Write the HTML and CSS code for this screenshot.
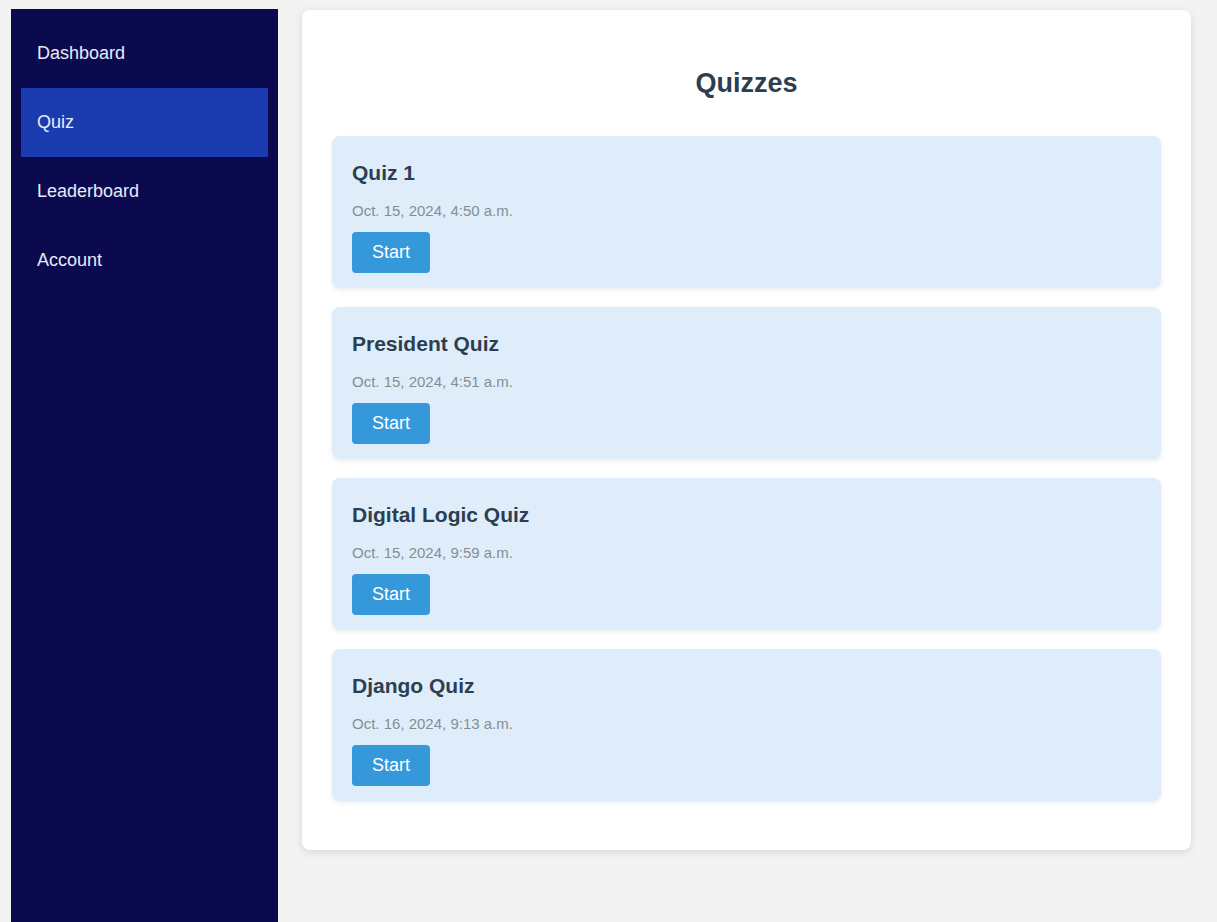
FILE: index.html
```html
<!DOCTYPE html>
<html lang="en">
<head>
<meta charset="utf-8">
<title>Quizzes</title>
<link rel="stylesheet" href="styles.css">
</head>
<body>
<div class="layout">
  <nav class="sidebar">
    <a class="nav-item" href="#">Dashboard</a>
    <a class="nav-item active" href="#">Quiz</a>
    <a class="nav-item" href="#">Leaderboard</a>
    <a class="nav-item" href="#">Account</a>
  </nav>
  <main class="content">
    <h2 class="page-title">Quizzes</h2>
    <div class="quiz-card">
      <h3 class="quiz-title">Quiz 1</h3>
      <p class="quiz-date">Oct. 15, 2024, 4:50 a.m.</p>
      <a class="start-btn" href="#">Start</a>
    </div>
    <div class="quiz-card">
      <h3 class="quiz-title">President Quiz</h3>
      <p class="quiz-date">Oct. 15, 2024, 4:51 a.m.</p>
      <a class="start-btn" href="#">Start</a>
    </div>
    <div class="quiz-card">
      <h3 class="quiz-title">Digital Logic Quiz</h3>
      <p class="quiz-date">Oct. 15, 2024, 9:59 a.m.</p>
      <a class="start-btn" href="#">Start</a>
    </div>
    <div class="quiz-card">
      <h3 class="quiz-title">Django Quiz</h3>
      <p class="quiz-date">Oct. 16, 2024, 9:13 a.m.</p>
      <a class="start-btn" href="#">Start</a>
    </div>
  </main>
</div>
</body>
</html>
```
FILE: styles.css
```css
* { box-sizing: border-box; }
html, body { margin: 0; padding: 0; }
body {
  background: #f3f3f3;
  font-family: "Liberation Sans", Arial, sans-serif;
  overflow: hidden;
}
.layout {
  display: flex;
  align-items: flex-start;
  padding: 9px 26px 0 11px;
  gap: 24px;
}
.sidebar {
  flex: 0 0 267px;
  height: 100vh;
  background: #0c0a4f;
  padding: 10px;
  display: flex;
  flex-direction: column;
}
.nav-item {
  display: block;
  height: 69px;
  line-height: 69px;
  padding-left: 16px;
  color: #e8ebf7;
  font-size: 18px;
  text-decoration: none;
}
.nav-item.active {
  background: #1a3cb0;
}
.content {
  flex: 1;
  margin-top: 1px;
  background: #ffffff;
  border-radius: 8px;
  box-shadow: 0 2px 8px rgba(0, 0, 0, 0.12);
  padding: 30px 30px 30px;
}
.page-title {
  margin: 28px 0 37px;
  text-align: center;
  font-size: 27px;
  font-weight: bold;
  color: #2c3e50;
}
.quiz-card {
  background: #dfedfa;
  border-radius: 8px;
  box-shadow: 0 2px 5px rgba(0, 0, 0, 0.08);
  padding: 20px 20px 15px;
  margin-bottom: 19px;
  display: flex;
  flex-direction: column;
  align-items: flex-start;
}
.quiz-title {
  margin: 5px 0 17px;
  font-size: 21px;
  font-weight: bold;
  color: #2c3e50;
}
.quiz-date {
  margin: 0 0 13px;
  font-size: 15px;
  color: #868d91;
}
.start-btn {
  display: block;
  background: #3498db;
  color: #ffffff;
  font-size: 18px;
  padding: 10px 20px;
  border-radius: 4px;
  text-decoration: none;
}
```
